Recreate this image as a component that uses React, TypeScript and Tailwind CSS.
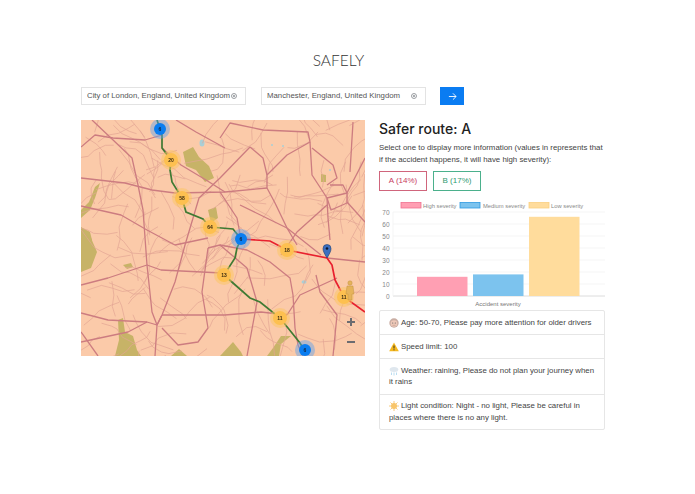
import React from "react";

const majors = [
  "M0 58L44 63L71 70L94 73L144 72L186 68","M11 0L51 38L57 65L62 90L66 145","M0 27L14 15L32 18L64 20L81 15","M81 28L100 45L125 60L144 72",
  "M144 28L115 12L95 0","M139 18L149 3L182 10L227 12L229 22L206 35L186 55L186 68L194 83L206 108L216 125","M169 27L182 38L186 55","M169 27L139 58L118 78L104 125L94 162L81 195L76 205L74 236",
  "M139 72L156 98L160 119","M229 22L231 55L246 78L247 98L249 120","M246 78L266 73L284 38","M231 28L252 45L256 58L246 65","M249 65L262 65L266 73L266 83L250 90L246 78","M266 82L284 102","M272 2L269 52",
  "M159 85L206 108L240 135","M246 85L216 112L200 135","M0 165L27 158L66 145L80 150L141 153","M66 145L71 192L76 205L81 195","M94 125L127 118","M0 193L27 200L66 202L76 205","M0 222L47 212L66 202","M81 195L111 195L144 195L180 192L206 195",
  "M81 208L97 225L117 222L127 208L121 172L127 128","M0 212L17 236","M139 125L166 130L189 142L209 158L212 175L214 208L217 225L222 236","M166 148L171 165L176 182L166 236","M246 138L284 142","M256 158L219 175L206 195","M252 236L256 195L239 172L235 155","M127 128L139 125L166 148","M0 86L40 95L66 110L94 125"
];
const minors: string[] = (() => {
  let s = 11;
  const r = () => { s = (s * 16807) % 2147483647; return s / 2147483647; };
  const out: string[] = [];
  for (let i = 0; i < 170; i++) {
    let x = r() * 284, y = r() * 236, a = r() * 6.28;
    let d = `M${x.toFixed(1)} ${y.toFixed(1)}`;
    const n = 3 + Math.floor(r() * 3);
    for (let j = 0; j < n; j++) {
      a += (r() - 0.5) * 1.2;
      const l = 6 + r() * 10;
      x += Math.cos(a) * l; y += Math.sin(a) * l;
      d += `L${x.toFixed(1)} ${y.toFixed(1)}`;
    }
    out.push(d);
  }
  return out;
})();

function Cluster({ x, y, n, blue }: { x: number; y: number; n: string; blue?: boolean }) {
  return blue ? (
    <g>
      <circle cx={x} cy={y} r="10" fill="#5aa0ee" opacity="0.45" />
      <circle cx={x} cy={y} r="6" fill="#0a7df0" />
      <text x={x} y={y + 2} textAnchor="middle" fontSize="5" fontWeight="700" fill="#10233f" fontFamily="Liberation Sans, sans-serif">{n}</text>
    </g>
  ) : (
    <g>
      <circle cx={x} cy={y} r="10" fill="#fcc560" opacity="0.5" />
      <circle cx={x} cy={y} r="7" fill="#fdc050" />
      <text x={x} y={y + 2} textAnchor="middle" fontSize="5" fontWeight="700" fill="#3a2a10" fontFamily="Liberation Sans, sans-serif">{n}</text>
    </g>
  );
}

function MapView() {
  return (
    <svg viewBox="0 0 284 236" className="w-[284px] h-[236px] shrink-0 blur-[0.4px]">
      <rect width="284" height="236" fill="#fbcaa9" />
      <g fill="#c5b264" opacity="0.95">
        <path d="M102 32L112 27L118 37L128 46L133 58L124 62L115 50L105 46Z" />
        <path d="M0 90L8 82L14 67L19 63L14 78L9 90L0 98Z" />
        <path d="M0 107L9 112L11 120L0 122Z" />
        <path d="M0 115L10 118L16 132L10 148L0 152Z" />
        <path d="M37 200L42 198L44 212L52 216L56 230L60 236L34 236L38 220Z" />
        <path d="M90 236L98 229L106 236Z" />
        <path d="M139 236L152 222L160 232L162 236Z" />
        <path d="M186 236L192 228L200 216L210 216L200 224L198 236Z" />
        <path d="M127 90L135 87L137 98L130 103Z" />
        <path d="M240 54L245 55L245 62L240 62Z" />
        <path d="M42 145L50 143L52 147L46 149Z" />
      </g>
      <g fill="#a9cfd6">
        <ellipse cx="121" cy="23" rx="2.500" ry="3.500" />
        <circle cx="191" cy="25" r="1" />
        <circle cx="202" cy="26" r="1" />
        <circle cx="249" cy="50" r="1" />
        <ellipse cx="223" cy="162" rx="2.500" ry="1.800" />
      </g>
      <g fill="none" stroke="#e2a593" strokeWidth="0.7">
        {minors.map((d, i) => <path key={i} d={d} />)}
      </g>
      <g fill="none" stroke="#cc7c80" strokeWidth="1.3" strokeLinejoin="round">
        {majors.map((d, i) => <path key={i} d={d} />)}
      </g>
      <path d="M160 119L189 121L206 130L246 138L251 145L254 160L263 177L284 192" fill="none" stroke="#e8202e" strokeWidth="1.7" />
      <path d="M76 0L81 15L81 28L90 40L89 50L91 62L101 78L105 92L122 99L129 107L152 109L160 119L156 128L154 138L143 155L152 163L169 178L179 182L199 198L219 223L223 230" fill="none" stroke="#3f7a33" strokeWidth="1.7" />
      <Cluster x={79} y={9} n="6" blue />
      <Cluster x={90} y={40} n="20" />
      <Cluster x={101} y={78} n="58" />
      <Cluster x={129} y={107} n="64" />
      <Cluster x={160} y={119} n="6" blue />
      <Cluster x={143} y={155} n="13" />
      <Cluster x={206} y={130} n="18" />
      <Cluster x={199} y={198} n="11" />
      <Cluster x={263} y={177} n="11" />
      <Cluster x={224} y={230} n="6" blue />
      <path d="M246 138C243 133 242 131 242 128.500A4 4 0 0 1 250 128.500C250 131 249 133 246 138Z" fill="#3b6fc0" stroke="#24406f" strokeWidth="0.6" />
      <circle cx="246" cy="128.500" r="1.3" fill="#0b1730" />
      <g fill="#e6b35a" stroke="#b98a3c" strokeWidth="0.4">
        <circle cx="269" cy="163" r="2.2" />
        <path d="M266 166H272L273 174H271V180H267V174H265Z" />
      </g>
      <path d="M270 198V206M266 202H274" stroke="#6c6c70" strokeWidth="2" />
      <path d="M266 222H274" stroke="#6c6c70" strokeWidth="2" />
    </svg>
  );
}

function Target() {
  return (
    <svg viewBox="0 0 8 8" className="w-[6px] h-[6px] shrink-0">
      <circle cx="4" cy="4" r="3.300" fill="none" stroke="#8b8f94" strokeWidth="1.200" />
      <circle cx="4" cy="4" r="1.300" fill="#8b8f94" />
    </svg>
  );
}

function Chart() {
  const ys = [0, 10, 20, 30, 40, 50, 60, 70];
  const y = (v: number) => 296 - v * 1.2;
  const t = "Liberation Sans, sans-serif";
  const bars = [
    { x: 417, v: 16, c: "#ff9fb3" },
    { x: 473, v: 18, c: "#7cc3ee" },
    { x: 529, v: 66, c: "#ffdc9c" },
  ];
  const leg = [
    { x: 401, w: 20, c: "#ff9fb3", b: "#f0718f", l: "High severity", lx: 423 },
    { x: 460, w: 20, c: "#7cc3ee", b: "#2f9ae0", l: "Medium severity", lx: 483 },
    { x: 529, w: 20, c: "#ffdc9c", b: "#fbcf80", l: "Low severity", lx: 551 },
  ];
  return (
    <svg viewBox="379 196 226 114" className="w-[226px] h-[114px] block mt-[5px]">
      {ys.map((v) => (
        <g key={v}>
          <path d={`M393 ${y(v)}H605`} stroke={v === 0 ? "#dcdcdc" : "#f2f2f2"} strokeWidth={v === 0 ? 1 : 0.8} />
          <text x="389.500" y={y(v) + 2.500} textAnchor="end" fontSize="6.500" fill="#888" fontFamily={t}>{v}</text>
        </g>
      ))}
      <path d="M393 212V296" stroke="#f2f2f2" strokeWidth="0.8" />
      {bars.map((b) => <rect key={b.x} x={b.x} y={y(b.v)} width="50.500" height={b.v * 1.2} fill={b.c} />)}
      {leg.map((l) => (
        <g key={l.l}>
          <rect x={l.x} y="202.500" width={l.w} height="5.500" fill={l.c} stroke={l.b} strokeWidth="0.8" />
          <text x={l.lx} y="207.500" fontSize="5.800" fill="#888" fontFamily={t}>{l.l}</text>
        </g>
      ))}
      <text x="498" y="306" textAnchor="middle" fontSize="6" fill="#777" fontFamily={t}>Accident severity</text>
    </svg>
  );
}

const Face = () => (
  <svg viewBox="0 0 10 10" className="inline-block w-[10px] h-[10px] -my-[2px] mr-[2px] align-[-1px]">
    <circle cx="5" cy="5" r="4.700" fill="#c9ada3" />
    <circle cx="5" cy="5.500" r="3.300" fill="#efc8b8" />
    <circle cx="3.700" cy="5" r="0.600" fill="#666" />
    <circle cx="6.300" cy="5" r="0.600" fill="#666" />
    <path d="M3.500 7.300H6.500" stroke="#b98" strokeWidth="0.6" />
  </svg>
);
const Warn = () => (
  <svg viewBox="0 0 10 10" className="inline-block w-[10px] h-[10px] -my-[2px] mr-[2px] align-[-1px]">
    <path d="M5 0.500L9.800 9.300H0.200Z" fill="#f5b81e" />
    <path d="M5 3.500V6.500M5 7.300V8.300" stroke="#222" strokeWidth="0.9" />
  </svg>
);
const Snow = () => (
  <svg viewBox="0 0 10 10" className="inline-block w-[10px] h-[10px] -my-[2px] mr-[2px] align-[-1px]">
    <ellipse cx="5" cy="3.500" rx="4.300" ry="2.500" fill="#dfe7ee" />
    <path d="M2.500 6.500V9M5 6.500V9.500M7.500 6.500V9" stroke="#a8d4ee" strokeWidth="0.8" />
  </svg>
);
const Sun = () => (
  <svg viewBox="0 0 10 10" className="inline-block w-[10px] h-[10px] -my-[2px] mr-[2px] align-[-1px]">
    <path d="M5 0V10M0 5H10M1.500 1.500L8.500 8.500M8.500 1.500L1.500 8.500" stroke="#f6bd5b" strokeWidth="0.8" />
    <circle cx="5" cy="5" r="3" fill="#f8c56a" />
  </svg>
);

const rowCls = "px-[9px] py-[5.750px] leading-[11.500px] border-b border-[#e6e6e6] last:border-b-0";

export default function App() {
  return (
    <div className="w-[695px] h-[494px] bg-white overflow-hidden text-[#444] font-['Liberation_Sans',sans-serif]">
      <h1 className="pt-[51px] pr-[18px] text-center text-[15.500px] leading-[19px] font-light text-[#333] font-['Lato',sans-serif]">SAFELY</h1>
      <div className="mt-[17px] pl-[81px] flex items-stretch h-[18px] text-[7.800px] text-[#555]">
        <div className="w-[165px] border border-[#e3e3e3] flex items-center justify-between pl-[5px] pr-[8px]">
          <span className="w-[144px] overflow-hidden whitespace-nowrap">City of London, England, United Kingdom</span>
          <Target />
        </div>
        <div className="ml-[15px] w-[165px] border border-[#e3e3e3] flex items-center justify-between pl-[5px] pr-[8px]">
          <span className="whitespace-nowrap">Manchester, England, United Kingdom</span>
          <Target />
        </div>
        <div className="ml-[14px] w-[24px] bg-[#0a7cf2] flex items-center justify-center">
          <svg viewBox="0 0 10 10" className="w-[9px] h-[9px]" fill="none" stroke="#fff" strokeWidth="1">
            <path d="M1 5H9M5.500 1.500L9 5L5.500 8.500" />
          </svg>
        </div>
      </div>
      <div className="mt-[15px] pl-[81px] flex items-start">
        <MapView />
        <div className="ml-[14px] w-[226px]">
          <h2 className="text-[14px] leading-[18px] font-medium text-[#222] font-['Inter',sans-serif]">Safer route: A</h2>
          <p className="mt-[4px] text-[7.850px] leading-[12px] text-[#444]">Select one to display more information (values in represents that if the accident happens, it will have high severity):</p>
          <div className="mt-[5px] flex gap-[6px] text-[8px]">
            <div className="w-[48px] h-[20px] border border-[#d0657c] text-[#c9405f] flex items-center justify-center">A (14%)</div>
            <div className="w-[48px] h-[20px] border border-[#4bb08c] text-[#2f9a6f] flex items-center justify-center">B (17%)</div>
          </div>
          <Chart />
          <div className="border border-[#e6e6e6] rounded-[2px] text-[7.850px] text-[#444]">
            <div className={rowCls}><Face />Age: 50-70, Please pay more attention for older drivers</div>
            <div className={rowCls}><Warn />Speed limit: 100</div>
            <div className={rowCls}><Snow />Weather: raining, Please do not plan your journey when it rains</div>
            <div className={rowCls}><Sun />Light condition: Night - no light, Please be careful in places where there is no any light.</div>
          </div>
        </div>
      </div>
    </div>
  );
}
